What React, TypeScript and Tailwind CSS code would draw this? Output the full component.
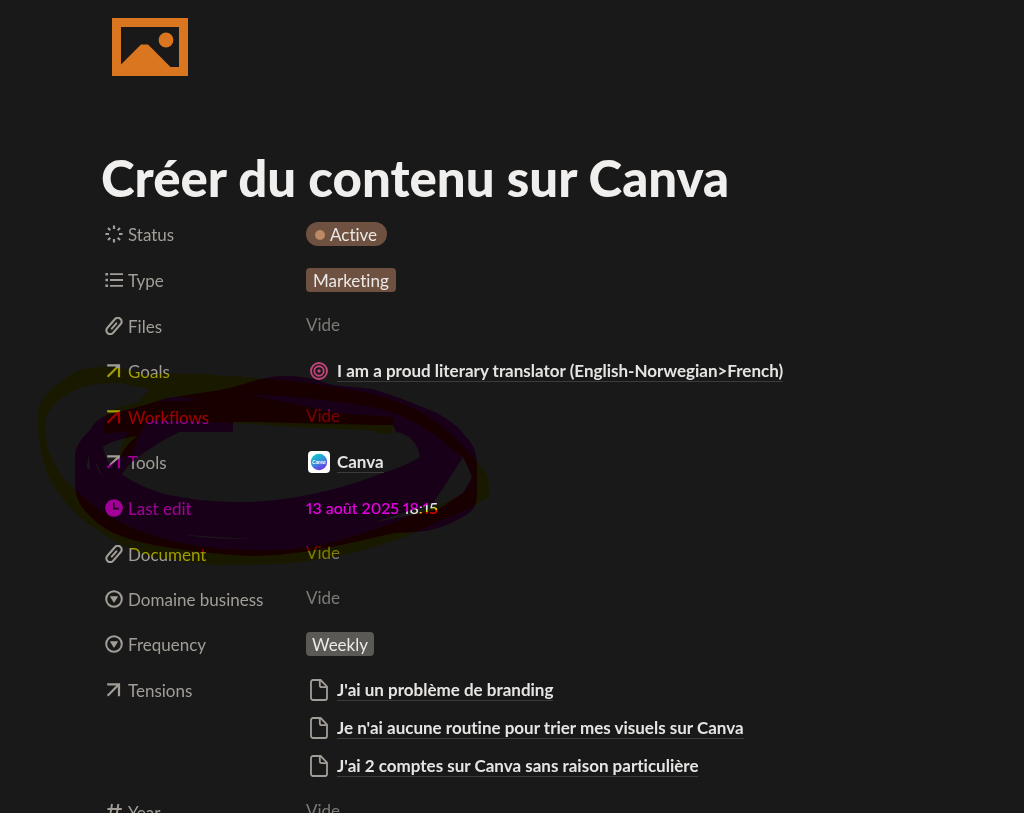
import type { ReactNode } from 'react';
import clsx from 'clsx';

const StatusIcon = () => (
  <svg viewBox="0 0 18 18" className="w-[18px] h-[18px]" fill="none" stroke="currentColor" strokeWidth="2.2">
    <path d="M9 .4v3.6M9 14v3.6M.4 9h3.6M14 9h3.6M3 3l2.3 2.3M12.7 12.7l2.3 2.3M3 15l2.3-2.3M12.7 5.3l2.3-2.3" />
  </svg>
);

const ListIcon = () => (
  <svg viewBox="0 0 18 18" className="w-[18px] h-[18px]" fill="none" stroke="currentColor" strokeWidth="1.8">
    <path d="M5 3.2h13M5 9h13M5 14.8h13" />
    <path d="M.4 3.2h2.6M.4 9h2.6M.4 14.8h2.6" strokeWidth="2.6" />
  </svg>
);

const ClipIcon = () => (
  <svg viewBox="0 0 18 18" className="w-[18px] h-[18px]" fill="none" stroke="currentColor" strokeWidth="2.2" strokeLinecap="round">
    <g transform="rotate(41 9 9)">
      <path d="M5.2 8V3.2a3.8 3.8 0 0 1 7.6 0v11.6a3.8 3.8 0 0 1-7.6 0V8" />
      <path d="M9 5.4v7" strokeWidth="2" />
    </g>
  </svg>
);

const ArrowIcon = () => (
  <svg viewBox="0 0 18 18" className="w-[18px] h-[18px]" fill="none" stroke="currentColor" strokeWidth="2.2">
    <path d="M2.2 3.4h11.8v11.8M13.6 3.8 2.6 14.8" />
  </svg>
);

const ClockIcon = () => (
  <svg viewBox="0 0 18 18" className="w-[18px] h-[18px]">
    <circle cx="9" cy="9" r="8.8" fill="currentColor" />
    <path d="M8.8 3.6v6h5" fill="none" stroke="#191919" strokeWidth="1.6" />
  </svg>
);

const SelectIcon = () => (
  <svg viewBox="0 0 18 18" className="w-[18px] h-[18px]">
    <circle cx="9" cy="9" r="7.8" fill="none" stroke="currentColor" strokeWidth="2" />
    <path d="M5.4 6.2h7.2c.4 0 .5.3.3.6L9.5 12.3c-.2.4-.7.4-1 0L5.1 6.8c-.2-.3-.1-.6.3-.6z" fill="currentColor" />
  </svg>
);

const NumberIcon = () => (
  <svg viewBox="0 0 18 18" className="w-[18px] h-[18px]" fill="none" stroke="currentColor" strokeWidth="1.9">
    <path d="M7 1 4.4 17M13.4 1l-2.6 16M2.4 6h14.4M1.2 12h14.4" />
  </svg>
);

const PageIcon = () => (
  <svg viewBox="0 0 18 22" className="w-[18px] h-[22px] text-[#a29e97]" fill="none" stroke="currentColor" strokeWidth="1.8" strokeLinejoin="round">
    <path d="M3 1h7.6L17 7.6V19a2 2 0 0 1-2 2H3a2 2 0 0 1-2-2V3a2 2 0 0 1 2-2z" />
    <path d="M9.8 1.4v4.8a2 2 0 0 0 2 2h4.8" />
  </svg>
);

const TargetIcon = () => (
  <svg viewBox="0 0 18 18" className="w-[18px] h-[18px]" fill="none" stroke="#c2447a" strokeWidth="1.9">
    <circle cx="9" cy="9" r="8" />
    <circle cx="9" cy="9" r="4.7" />
    <circle cx="9" cy="9" r="1.7" fill="#c2447a" stroke="none" />
  </svg>
);

const CanvaIcon = () => (
  <svg viewBox="0 0 22 22" className="w-[22px] h-[22px]">
    <defs>
      <linearGradient id="canva" x1="0.2" y1="0" x2="0.7" y2="1">
        <stop offset="0.1" stopColor="#10c4cc" />
        <stop offset="0.55" stopColor="#3b86dc" />
        <stop offset="1" stopColor="#7a2be6" />
      </linearGradient>
    </defs>
    <rect width="22" height="22" rx="4" fill="#fff" />
    <circle cx="11" cy="11" r="8.2" fill="url(#canva)" />
    <text x="11" y="13" textAnchor="middle" fontSize="5" fontStyle="italic" fontWeight="700" fill="#fff">
      Canva
    </text>
  </svg>
);

const PictureIcon = () => (
  <svg viewBox="0 0 76 58" className="w-[76px] h-[58px]" fill="#d9761f">
    <path fillRule="evenodd" d="M0 0h76v58H0zM9 9v37.5L29 26.5h7L58.5 49H67V9z" />
    <circle cx="54" cy="22" r="7.4" />
  </svg>
);

// Highlighter loops, multiplied over the page so that the text stays readable
const Highlighter = () => (
  <svg
    viewBox="0 0 520 600"
    className="absolute left-0 top-0 w-[520px] h-[600px] pointer-events-none mix-blend-multiply"
    aria-hidden="true"
  >
    <rect width="520" height="600" fill="#fff" />
    <path
      className="mix-blend-multiply"
      fill="#ff0"
      fillRule="evenodd"
      d="M38 423C37 402 45 393 57 385C68 376 77 369 90 368C105 366 120 366 147 375C165 373 195 373 227 376L270 379C300 381 340 387 367 393C395 399 420 409 440 425C455 437 470 452 483 469C489 476 489 482 489 497L478 503C465 512 440 520 420 530C395 542 350 555 317 560C290 564 260 565 220 565C190 562 170 560 150 556C125 549 98 532 80 517C65 503 55 490 47 473C41 455 38 440 38 423Z
      M45 423C47 410 55 402 68 394C82 385 98 383 120 383L150 389C144 395 142 398 138 403C122 405 114 408 106 412L103 434L128 431C124 440 120 449 119 457L132 455C136 441 141 431 148 421C180 420 215 423 250 424C290 427 330 429 368 430L383 434L393 433V417L337 413L250 395C290 396 330 400 365 406C400 412 425 425 450 447L463 457L471 471C473 480 469 488 463 493C445 505 420 512 400 520C370 531 330 545 300 548C265 552 235 550 207 547C175 543 145 535 120 522C102 513 90 503 78 492C65 483 56 469 50 454C46 443 45 433 45 423Z
      M160 401L173 396L200 400L185 401Z"
    />
    <path
      className="mix-blend-multiply"
      fill="#f0f"
      fillRule="evenodd"
      d="M75 453C78 442 84 436 90 430C95 421 100 418 107 415C125 410 150 404 167 398L220 390C240 386 250 381 270 377C285 375 305 376 320 381L333 385L373 389L400 398L437 413C450 420 460 428 465 436C473 443 477 452 477 467V495C477 506 472 512 463 517C450 524 435 531 417 532L395 533C370 538 345 545 320 549C300 553 275 556 250 556C215 554 180 550 153 545C138 542 125 538 113 533C98 525 86 514 80 504C76 497 75 490 75 480Z
      M122 474C130 462 140 455 153 447C162 441 170 436 180 432H233V422L250 422L373 425H393L396 432C410 434 418 444 420 457C408 464 396 469 383 473C362 481 340 488 317 493C295 498 272 501 250 502C220 502 203 501 187 498C172 496 160 493 153 490C141 486 130 480 122 474Z
      M463 457L472 477L463 493L437 510L412 515L375 522L406 512L433 503L444 487Z
      M103 447Q112 440 137 436Q125 445 119 459L110 465Q105 457 103 447Z
      M89 455L87 465Q86 469 90 469Z
      M96 464Q98 472 105 479Q99 472 97 463Z
      M186 535Q210 539 252 539Q215 537 186 535Z"
    />
  </svg>
);

const Tag = ({ className, children }: { className: string; children: ReactNode }) => (
  <span className={clsx('inline-flex items-center h-6 pt-px text-[#ebe8e5]', className)}>{children}</span>
);

const PageLink = ({ icon, children }: { icon: ReactNode; children: ReactNode }) => (
  <a href="#" className="flex items-center gap-[5px] font-bold text-[#e6e5e3]">
    <span className="flex justify-center w-[26px] shrink-0">{icon}</span>
    <span className="border-b border-[#3b3b3a] leading-5">{children}</span>
  </a>
);

type Property = {
  name: string;
  icon: ReactNode;
  value?: ReactNode;
};

const properties: Property[] = [
  {
    name: 'Status',
    icon: <StatusIcon />,
    value: (
      <Tag className="rounded-full bg-[#6e5140] gap-[5px] pl-[9px] pr-[10px]">
        <span className="w-[10px] h-[10px] rounded-full bg-[#bb8a63]" />
        Active
      </Tag>
    ),
  },
  {
    name: 'Type',
    icon: <ListIcon />,
    value: <Tag className="rounded bg-[#6e5140] px-[7px]">Marketing</Tag>,
  },
  { name: 'Files', icon: <ClipIcon /> },
  {
    name: 'Goals',
    icon: <ArrowIcon />,
    value: (
      <PageLink icon={<TargetIcon />}>
        I am a proud literary translator (English-Norwegian&gt;French)
      </PageLink>
    ),
  },
  { name: 'Workflows', icon: <ArrowIcon /> },
  {
    name: 'Tools',
    icon: <ArrowIcon />,
    value: <PageLink icon={<CanvaIcon />}>Canva</PageLink>,
  },
  {
    name: 'Last edit',
    icon: <ClockIcon />,
    value: <time className="text-base proportional-nums font-medium text-[#e6e5e3]">13 août 2025 18:15</time>,
  },
  { name: 'Document', icon: <ClipIcon /> },
  { name: 'Domaine business', icon: <SelectIcon /> },
  {
    name: 'Frequency',
    icon: <SelectIcon />,
    value: <Tag className="rounded bg-[#5a5955] px-[6px]">Weekly</Tag>,
  },
  {
    name: 'Tensions',
    icon: <ArrowIcon />,
    value: (
      <ul className="py-[3px]">
        {[
          "J'ai un problème de branding",
          "Je n'ai aucune routine pour trier mes visuels sur Canva",
          "J'ai 2 comptes sur Canva sans raison particulière",
        ].map((tension) => (
          <li key={tension} className="flex items-center h-[38px]">
            <PageLink icon={<PageIcon />}>{tension}</PageLink>
          </li>
        ))}
      </ul>
    ),
  },
  { name: 'Year', icon: <NumberIcon /> },
];

export default function App() {
  return (
    <div className="relative isolate h-screen overflow-hidden bg-[#191919] font-[Lato,sans-serif] text-[17px] leading-6 [font-variant-ligatures:none]">
      <main className="pl-[101px] pr-8 pt-[18px]">
        <div className="pl-[11px]">
          <PictureIcon />
        </div>
        <h1 className="mt-[70px] mb-[2px] text-[51px] leading-[64px] font-black text-[#f0efed]">
          Créer du contenu sur Canva
        </h1>
        <dl>
          {properties.map(({ name, icon, value }) => (
            <div key={name} className={clsx('flex', value ? 'min-h-[46px]' : 'min-h-[45px]')}>
              <dt className="flex items-start gap-[5px] w-[200px] pt-[11px] pl-1 shrink-0 text-[#a29e97]">
                <span className="pt-[2px]">{icon}</span>
                {name}
              </dt>
              <dd className={clsx('flex items-center pl-[5px] text-[#7d7b77]', value ? 'pb-0.5' : 'pb-1')}>
                {value ?? 'Vide'}
              </dd>
            </div>
          ))}
        </dl>
      </main>
      <Highlighter />
    </div>
  );
}
